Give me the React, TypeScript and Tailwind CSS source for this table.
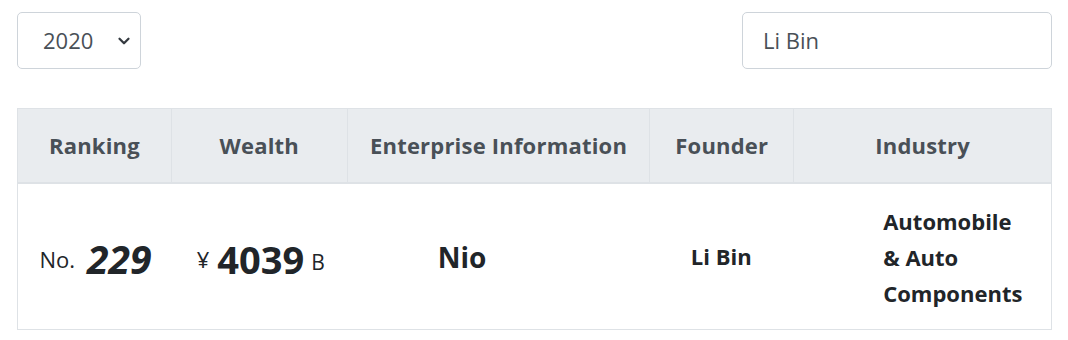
import { ChevronDown } from "lucide-react";

const cols = [
  { label: "Ranking", w: "w-[153px]" },
  { label: "Wealth", w: "w-[176px]" },
  { label: "Enterprise Information", w: "w-[303px]" },
  { label: "Founder", w: "w-[144px]" },
  { label: "Industry", w: "w-[258px]" },
];

export default function App() {
  return (
    <div className="w-[1068px] h-[340px] bg-white font-['Open_Sans',sans-serif] text-[#212529]">
      {/* Filters */}
      <div className="flex justify-between pl-[17px] pr-[16px] pt-[12px]">
        <div className="w-[124px] h-[57px] border border-[#ced4da] rounded-[5px] flex items-center pl-[25px] pr-[7px] text-[22px] text-[#495057]">
          <span className="flex-1">2020</span>
          <ChevronDown className="w-[18px] h-[18px] text-[#343a40]" strokeWidth={3} />
        </div>
        <div className="w-[310px] h-[57px] border border-[#ced4da] rounded-[5px] flex items-center pl-[20px] text-[22px] text-[#495057]">
          Li Bin
        </div>
      </div>

      {/* Table */}
      <div className="mx-[17px] mt-[39px] w-[1035px] border border-[#dee2e6]">
        <div className="flex bg-[#e9ecef] border-b-2 border-[#dee2e6] h-[75px]">
          {cols.map((c, i) => (
            <div
              key={c.label}
              className={`${c.w} flex items-center justify-center text-[22px] font-bold text-[#495057] tracking-[0.2px] ${i > 0 ? "border-l border-[#dee2e6]" : ""}`}
            >
              {c.label}
            </div>
          ))}
        </div>
        <div className="flex h-[145px]">
          <div className="w-[153px] flex items-center justify-center pt-[6px] pl-[2px]">
            <span className="text-[22px]">No.</span>
            <span className="ml-[12px] text-[39px] font-bold italic">229</span>
          </div>
          <div className="w-[176px] flex items-center justify-center pt-[6px] pl-[4px]">
            <span className="text-[22px]">¥</span>
            <span className="ml-[8px] text-[38px] font-bold">4039</span>
            <span className="ml-[7px] text-[21px] pt-[6px]">B</span>
          </div>
          <div className="w-[303px] flex items-center justify-center pr-[72px] text-[28px] font-bold">
            Nio
          </div>
          <div className="w-[144px] flex items-center justify-center text-[22px] font-bold">
            Li Bin
          </div>
          <div className="w-[258px] flex items-center pl-[90px] text-[22px] font-bold leading-[36px]">
            <div>
              Automobile
              <br />
              &amp; Auto
              <br />
              Components
            </div>
          </div>
        </div>
      </div>
    </div>
  );
}
